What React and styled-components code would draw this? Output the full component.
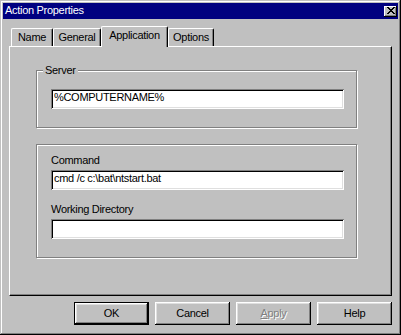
import styled, { createGlobalStyle } from 'styled-components';

// 기본 스타일
const GlobalStyle = createGlobalStyle`
  html, body {
    margin: 0;
    padding: 0;
    background: #c0c0c0;
  }
  * {
    box-sizing: border-box;
  }
`

// 창 전체
const Window = styled.div`
  width: 401px;
  height: 335px;
  padding: 3px;
  display: flex;
  flex-direction: column;
  background: #c0c0c0;
  box-shadow: inset -1px -1px #000, inset 1px 1px #c0c0c0,
    inset -2px -2px #808080, inset 2px 2px #fff;
  font-family: "Liberation Sans", Arial, sans-serif;
  font-size: 11px;
  letter-spacing: -0.3px;
  color: #000;
`
// 제목 표시줄
const TitleBar = styled.div`
  height: 16px;
  display: flex;
  align-items: center;
  justify-content: space-between;
  padding: 0 1px 1px 2px;
  background: #000080;
`
const Title = styled.span`
  color: #fff;
  line-height: 13px;
`
// 닫기 버튼
const CloseButton = styled.div`
  width: 13px;
  height: 11px;
  margin-top: 1px;
  display: flex;
  align-items: center;
  justify-content: center;
  padding: 0 0 1px 1px;
  background: #c0c0c0;
  box-shadow: inset -1px -1px #000, inset 1px 1px #fff, inset -2px -2px #808080;
`
// 본문
const Body = styled.div`
  flex: 1;
  display: flex;
  flex-direction: column;
  padding: 7px 6px 0;
`
// 탭 줄
const TabStrip = styled.div`
  height: 20px;
  display: flex;
  align-items: flex-end;
  padding-left: 2px;
`
const Tab = styled.div`
  position: relative;
  width: ${(p) => p.$w}px;
  height: ${(p) => (p.$active ? 21 : 18)}px;
  margin-bottom: ${(p) => (p.$active ? -1 : 0)}px;
  z-index: ${(p) => (p.$active ? 1 : 0)};
  padding-top: 2px;
  line-height: 13px;
  text-align: center;
  background: #c0c0c0;
  border-top: 1px solid #fff;
  border-left: 1px solid #fff;
  border-right: 1px solid #000;
  border-top-left-radius: 2px;
  border-top-right-radius: 2px;
  box-shadow: inset -1px 0 #808080;
`
// 탭 패널
const Panel = styled.div`
  height: 250px;
  padding: 23px 0 0 26px;
  border-top: 1px solid #fff;
  border-left: 1px solid #fff;
  border-right: 1px solid #000;
  border-bottom: 1px solid #000;
  box-shadow: inset -1px -1px #808080;
`
// 그룹 상자
const Group = styled.div`
  position: relative;
  width: 321px;
  margin-top: ${(p) => p.$mt || 0}px;
  padding: ${(p) => p.$pad};
  border: 1px solid #808080;
  box-shadow: 1px 1px 0 #fff, inset 1px 1px 0 #fff;
`
const Caption = styled.span`
  position: absolute;
  top: -7px;
  left: 6px;
  padding: 0 2px;
  line-height: 13px;
  background: #c0c0c0;
`
const Label = styled.div`
  margin: ${(p) => p.$mt || 0}px 0 3px 14px;
  line-height: 13px;
`
// 입력창
const Field = styled.input`
  display: block;
  width: 293px;
  height: 20px;
  margin-left: 14px;
  padding: 0 3px 4px;
  border: none;
  outline: none;
  background: #fff;
  font: inherit;
  letter-spacing: inherit;
  color: #000;
  box-shadow: inset 1px 1px #808080, inset -1px -1px #fff,
    inset 2px 2px #000, inset -2px -2px #dfdfdf;
`
// 버튼 줄
const ButtonRow = styled.div`
  display: flex;
  justify-content: flex-end;
  gap: 6px;
  margin-top: 6px;
`
const Button = styled.button`
  width: 75px;
  height: 23px;
  padding: 0 0 2px;
  border: ${(p) => (p.$default ? '1px solid #000' : 'none')};
  background: #c0c0c0;
  font: inherit;
  letter-spacing: inherit;
  color: ${(p) => (p.disabled ? '#808080' : '#000')};
  text-shadow: ${(p) => (p.disabled ? '1px 1px 0 #fff' : 'none')};
  box-shadow: inset -1px -1px #000, inset 1px 1px #fff,
    inset -2px -2px #808080, inset 2px 2px #dfdfdf;
`

function CloseGlyph() {
  // 8x7 픽셀 X
  const rows = ['##....##', '.##..##.', '..####..', '...##...', '..####..', '.##..##.', '##....##'];
  return (
    <svg width="8" height="7" viewBox="0 0 8 7" shapeRendering="crispEdges">
      {rows.map((r, y) =>
        r.split('').map((c, x) => (c === '#' ? <rect key={`${x}-${y}`} x={x} y={y} width="1" height="1" fill="#000" /> : null))
      )}
    </svg>
  );
}

const tabs = [
  { name: 'Name', w: 42 },
  { name: 'General', w: 48 },
  { name: 'Application', w: 67, active: true },
  { name: 'Options', w: 46 },
];

export default function App() {
  return (
    <>
      <GlobalStyle />
      <Window>
        <TitleBar>
          <Title>Action Properties</Title>
          <CloseButton><CloseGlyph /></CloseButton>
        </TitleBar>
        <Body>
          <TabStrip>
            {tabs.map((t) => (
              <Tab key={t.name} $w={t.w} $active={t.active}>{t.name}</Tab>
            ))}
          </TabStrip>
          <Panel>
            <Group $pad="18px 0">
              <Caption>Server</Caption>
              <Field readOnly value="%COMPUTERNAME%" />
            </Group>
            <Group $mt={16} $pad="9px 0 18px">
              <Label>Command</Label>
              <Field readOnly value="cmd /c c:\bat\ntstart.bat" />
              <Label $mt={13}>Working Directory</Label>
              <Field readOnly value="" />
            </Group>
          </Panel>
          <ButtonRow>
            <Button $default>OK</Button>
            <Button>Cancel</Button>
            <Button disabled><u>A</u>pply</Button>
            <Button>Help</Button>
          </ButtonRow>
        </Body>
      </Window>
    </>
  );
}
